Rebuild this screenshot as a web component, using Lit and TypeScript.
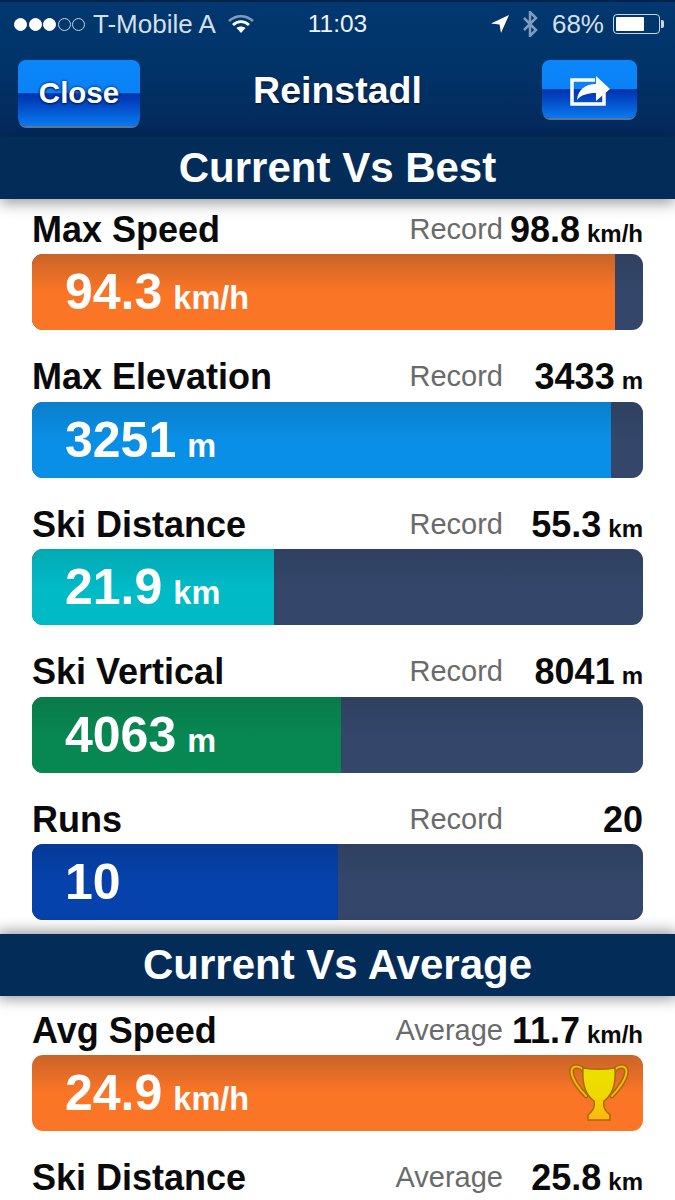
import { LitElement, css, html, nothing } from 'lit'
import { customElement, property } from 'lit/decorators.js'

const FONT = css`'Liberation Sans', Arial, sans-serif`

@customElement('stat-row')
export class StatRow extends LitElement {
  @property() label = ''
  @property() caption = 'Record'
  @property({ type: Number }) current = 0
  @property({ type: Number }) best = 0
  @property() unit = ''
  @property() color = 'orange'
  @property({ type: Boolean }) trophy = false

  render() {
    const pct = Math.min(100, (this.current / this.best) * 100)
    return html`
      <div class="head">
        <span class="label">${this.label}</span>
        <span class="caption">${this.caption}</span>
        <span class="record">${this.best}${this.unit ? html`<small>${this.unit}</small>` : nothing}</span>
      </div>
      <div class="track">
        <div class="fill ${this.color}" style="width: ${pct}%"></div>
        <div class="reading">
          <span class="num">${this.current}</span>${this.unit ? html`<span class="unit">${this.unit}</span>` : nothing}
        </div>
        ${this.trophy
          ? html`<svg class="trophy" viewBox="0 0 60 60">
              <defs>
                <linearGradient id="cup" x1="0" y1="0" x2="0" y2="1">
                  <stop offset="0" stop-color="#e8e000"/>
                  <stop offset=".55" stop-color="#f0d800"/>
                  <stop offset="1" stop-color="#fdb50e"/>
                </linearGradient>
              </defs>
              <path d="M15 8C12 3 5 2 3 6c-2 5 3 14 8 20 2 3 5 5 6 7" fill="none" stroke="#a86a08" stroke-width="5" stroke-linecap="round"/>
              <path d="M45 8c3-5 10-6 12-2 2 5-3 14-8 20-2 3-5 5-6 7" fill="none" stroke="#a86a08" stroke-width="5" stroke-linecap="round"/>
              <path d="M15 8C12 3 5 2 3 6c-2 5 3 14 8 20 2 3 5 5 6 7" fill="none" stroke="#f5b70a" stroke-width="2" stroke-linecap="round"/>
              <path d="M45 8c3-5 10-6 12-2 2 5-3 14-8 20-2 3-5 5-6 7" fill="none" stroke="#f5b70a" stroke-width="2" stroke-linecap="round"/>
              <path d="M14 5c10 1.500 22 1.500 32 0 1 14-1 26-11 33-1 5 0 8 3 11l3 3v5H19v-5l3-3c3-3 4-6 3-11C15 31 13 19 14 5z" fill="url(#cup)" stroke="#a86a08" stroke-width="1.500"/>
            </svg>`
          : nothing}
      </div>
    `
  }

  static styles = css`
    :host {
      display: block;
      font-family: ${FONT};
    }

    .head {
      display: grid;
      grid-template-columns: 1fr auto 140px;
      align-items: start;
      height: 55px;
      padding-top: 8.500px;
      box-sizing: border-box;
    }

    .label {
      font-size: 36px;
      font-weight: 700;
      color: #0a0a0a;
      line-height: 44px;
    }

    .caption {
      font-size: 29px;
      color: #6a6a6a;
      line-height: 42px;
    }

    .record {
      text-align: right;
      font-size: 36px;
      font-weight: 700;
      color: #0a0a0a;
      line-height: 44px;
    }

    .record small {
      font-size: 24px;
      margin-left: 7px;
    }

    .track {
      position: relative;
      height: 76px;
      border-radius: 11px;
      overflow: hidden;
      background: linear-gradient(#2f4060, #34476a 50%);
    }

    .fill {
      height: 100%;
    }

    .orange {
      background: linear-gradient(#c96428, #fb7526 50%);
    }

    .blue {
      background: linear-gradient(#0a7fcb, #0a8fe6 50%);
    }

    .teal {
      background: linear-gradient(#02a9b4, #00bac6 50%);
    }

    .green {
      background: linear-gradient(#0a7a4a, #078752 50%);
    }

    .navy {
      background: linear-gradient(#063a98, #0642ac 50%);
    }

    .reading {
      position: absolute;
      left: 33px;
      top: 0;
      bottom: 0;
      display: flex;
      align-items: baseline;
      gap: 11px;
      color: #fff;
      font-weight: 700;
      line-height: 76px;
    }

    .num {
      font-size: 50px;
    }

    .unit {
      font-size: 32.500px;
    }

    .trophy {
      position: absolute;
      right: 14px;
      top: 8px;
      width: 60px;
      height: 60px;
    }
  `
}

@customElement('app-root')
export class AppRoot extends LitElement {
  private best = [
    { label: 'Max Speed', current: 94.3, best: 98.8, unit: 'km/h', color: 'orange' },
    { label: 'Max Elevation', current: 3251, best: 3433, unit: 'm', color: 'blue' },
    { label: 'Ski Distance', current: 21.9, best: 55.3, unit: 'km', color: 'teal' },
    { label: 'Ski Vertical', current: 4063, best: 8041, unit: 'm', color: 'green' },
    { label: 'Runs', current: 10, best: 20, unit: '', color: 'navy' },
  ]

  private average = [
    { label: 'Avg Speed', current: 24.9, best: 11.7, unit: 'km/h', color: 'orange', trophy: true },
    { label: 'Ski Distance', current: 25.8, best: 25.8, unit: 'km', color: 'orange', trophy: false },
  ]

  private renderStatus() {
    return html`
      <div class="status">
        <div class="status-left">
          <span class="dots">
            ${[1, 1, 1, 0, 0].map((on) => html`<i class=${on ? 'on' : ''}></i>`)}
          </span>
          <span>T-Mobile A</span>
          <svg class="wifi" viewBox="0 0 26 20">
            <path d="M1 7c7-6.500 17-6.500 24 0" fill="none" stroke="#7f9cbc" stroke-width="2.500"/>
            <path d="M5 11c4.500-4.500 11.500-4.500 16 0" fill="none" stroke="#fff" stroke-width="2.800"/>
            <path d="M13 19l-4.500-5c2.500-2 6.500-2 9 0z" fill="#fff"/>
          </svg>
        </div>
        <div class="time">11:03</div>
        <div class="status-right">
          <svg class="arrow" viewBox="0 0 20 20"><path d="M19 1L1 9.500l8.500 1 1.500 8.500z" fill="#fff"/></svg>
          <svg class="bt" viewBox="0 0 16 26">
            <path d="M2 7l12 12-6 6V1l6 6L2 19" fill="none" stroke="#7f9cbc" stroke-width="2.500"/>
          </svg>
          <span class="pct">68%</span>
          <span class="battery"><b></b></span>
          <span class="nub"></span>
        </div>
      </div>
    `
  }

  private renderNav() {
    return html`
      <div class="nav">
        <div class="nav-side">
          <button class="btn close">Close</button>
        </div>
        <div class="title">Reinstadl</div>
        <div class="nav-side end">
          <button class="btn share">
            <svg viewBox="0 0 42 36" width="42" height="36">
              <path d="M26 9H3v24h32V21" fill="none" stroke="#fff" stroke-width="3.500"/>
              <path d="M8 29c1-10 8-16 19-16V5l14 13-14 12v-8c-9 0-15 2-19 7z" fill="#fff"/>
            </svg>
          </button>
        </div>
      </div>
    `
  }

  render() {
    return html`
      <div class="top">${this.renderStatus()} ${this.renderNav()}</div>
      <div class="section">Current Vs Best</div>
      <div class="rows">
        ${this.best.map(
          (r) => html`<stat-row
            .label=${r.label}
            .current=${r.current}
            .best=${r.best}
            .unit=${r.unit}
            .color=${r.color}
          ></stat-row>`
        )}
      </div>
      <div class="section second">Current Vs Average</div>
      <div class="rows avg">
        ${this.average.map(
          (r) => html`<stat-row
            caption="Average"
            .label=${r.label}
            .current=${r.current}
            .best=${r.best}
            .unit=${r.unit}
            .color=${r.color}
            .trophy=${r.trophy}
          ></stat-row>`
        )}
      </div>
    `
  }

  static styles = css`
    :host {
      display: block;
      width: 675px;
      height: 1200px;
      overflow: hidden;
      background: #fff;
      font-family: ${FONT};
    }

    .top {
      height: 137px;
      box-sizing: border-box;
      border-top: 2px solid #04214a;
      border-bottom: 1px solid #0a2c55;
      background: linear-gradient(#01386f, #013469 45%, #04295a);
    }

    .status {
      display: grid;
      grid-template-columns: 1fr auto 1fr;
      align-items: center;
      height: 44px;
      padding: 0 11px;
      color: #d4dfea;
      font-size: 26px;
    }

    .status-left,
    .status-right {
      display: flex;
      align-items: center;
    }

    .status-left {
      padding-left: 3px;
    }

    .status-right {
      justify-content: flex-end;
    }

    .dots {
      display: flex;
      gap: 1.500px;
      margin-right: 8px;
    }

    .dots i {
      width: 13px;
      height: 13px;
      box-sizing: border-box;
      border: 1.500px solid #c8d6e4;
      border-radius: 50%;
    }

    .dots i.on {
      background: #fff;
      border-color: #fff;
    }

    .wifi {
      width: 26px;
      height: 20px;
      margin-left: 12px;
    }

    .time {
      font-size: 24.500px;
      color: #eef3f8;
    }

    .arrow {
      width: 20px;
      height: 20px;
    }

    .bt {
      width: 16px;
      height: 26px;
      margin-left: 12px;
    }

    .pct {
      margin-left: 14px;
    }

    .battery {
      display: block;
      width: 47px;
      height: 20px;
      margin-left: 9px;
      padding: 2px;
      box-sizing: border-box;
      border: 1px solid #c8d6e4;
      border-radius: 4px;
    }

    .battery b {
      display: block;
      width: 68%;
      height: 100%;
      background: #fff;
      border-radius: 1px;
    }

    .nub {
      width: 3px;
      height: 8px;
      margin-left: 1px;
      background: #c8d6e4;
      border-radius: 0 2px 2px 0;
    }

    .nav {
      display: grid;
      grid-template-columns: 1fr auto 1fr;
      align-items: start;
      padding: 14px 18px 0;
    }

    .nav-side {
      display: flex;
    }

    .nav-side.end {
      justify-content: flex-end;
      padding-right: 20px;
    }

    .title {
      font-size: 37.500px;
      font-weight: 700;
      color: #fff;
      line-height: 60px;
      text-shadow: 0 1px 2px rgba(0, 0, 0, 0.7);
    }

    .btn {
      display: flex;
      align-items: center;
      justify-content: center;
      padding: 0;
      border: none;
      border-radius: 8px;
      color: #fff;
      font-family: inherit;
      background: linear-gradient(#0b86fb, #0a82f6 50%, #0034ac 51%, #0140bd 62%, #0a7af0);
      box-shadow: 0 3px 0 -1px #5a7696;
    }

    .close {
      width: 122px;
      height: 66px;
      font-size: 29.500px;
      font-weight: 700;
      text-shadow: 0 0 3px #001a50, 0 1px 2px #001a50;
    }

    .share {
      width: 95px;
      height: 58px;
    }

    .section {
      position: relative;
      z-index: 1;
      height: 62px;
      display: flex;
      align-items: center;
      justify-content: center;
      font-size: 42px;
      font-weight: 700;
      color: #fff;
      background: #042c59;
      box-shadow: 0 4px 14px rgba(0, 0, 0, 0.4);
    }

    .section.second {
      box-shadow: 0 0 14px 2px rgba(0, 0, 0, 0.45);
    }

    .rows {
      display: flex;
      flex-direction: column;
      gap: 16.500px;
      padding: 0 32px 14px;
    }

    .rows.avg {
      padding-top: 4px;
    }
  `
}
